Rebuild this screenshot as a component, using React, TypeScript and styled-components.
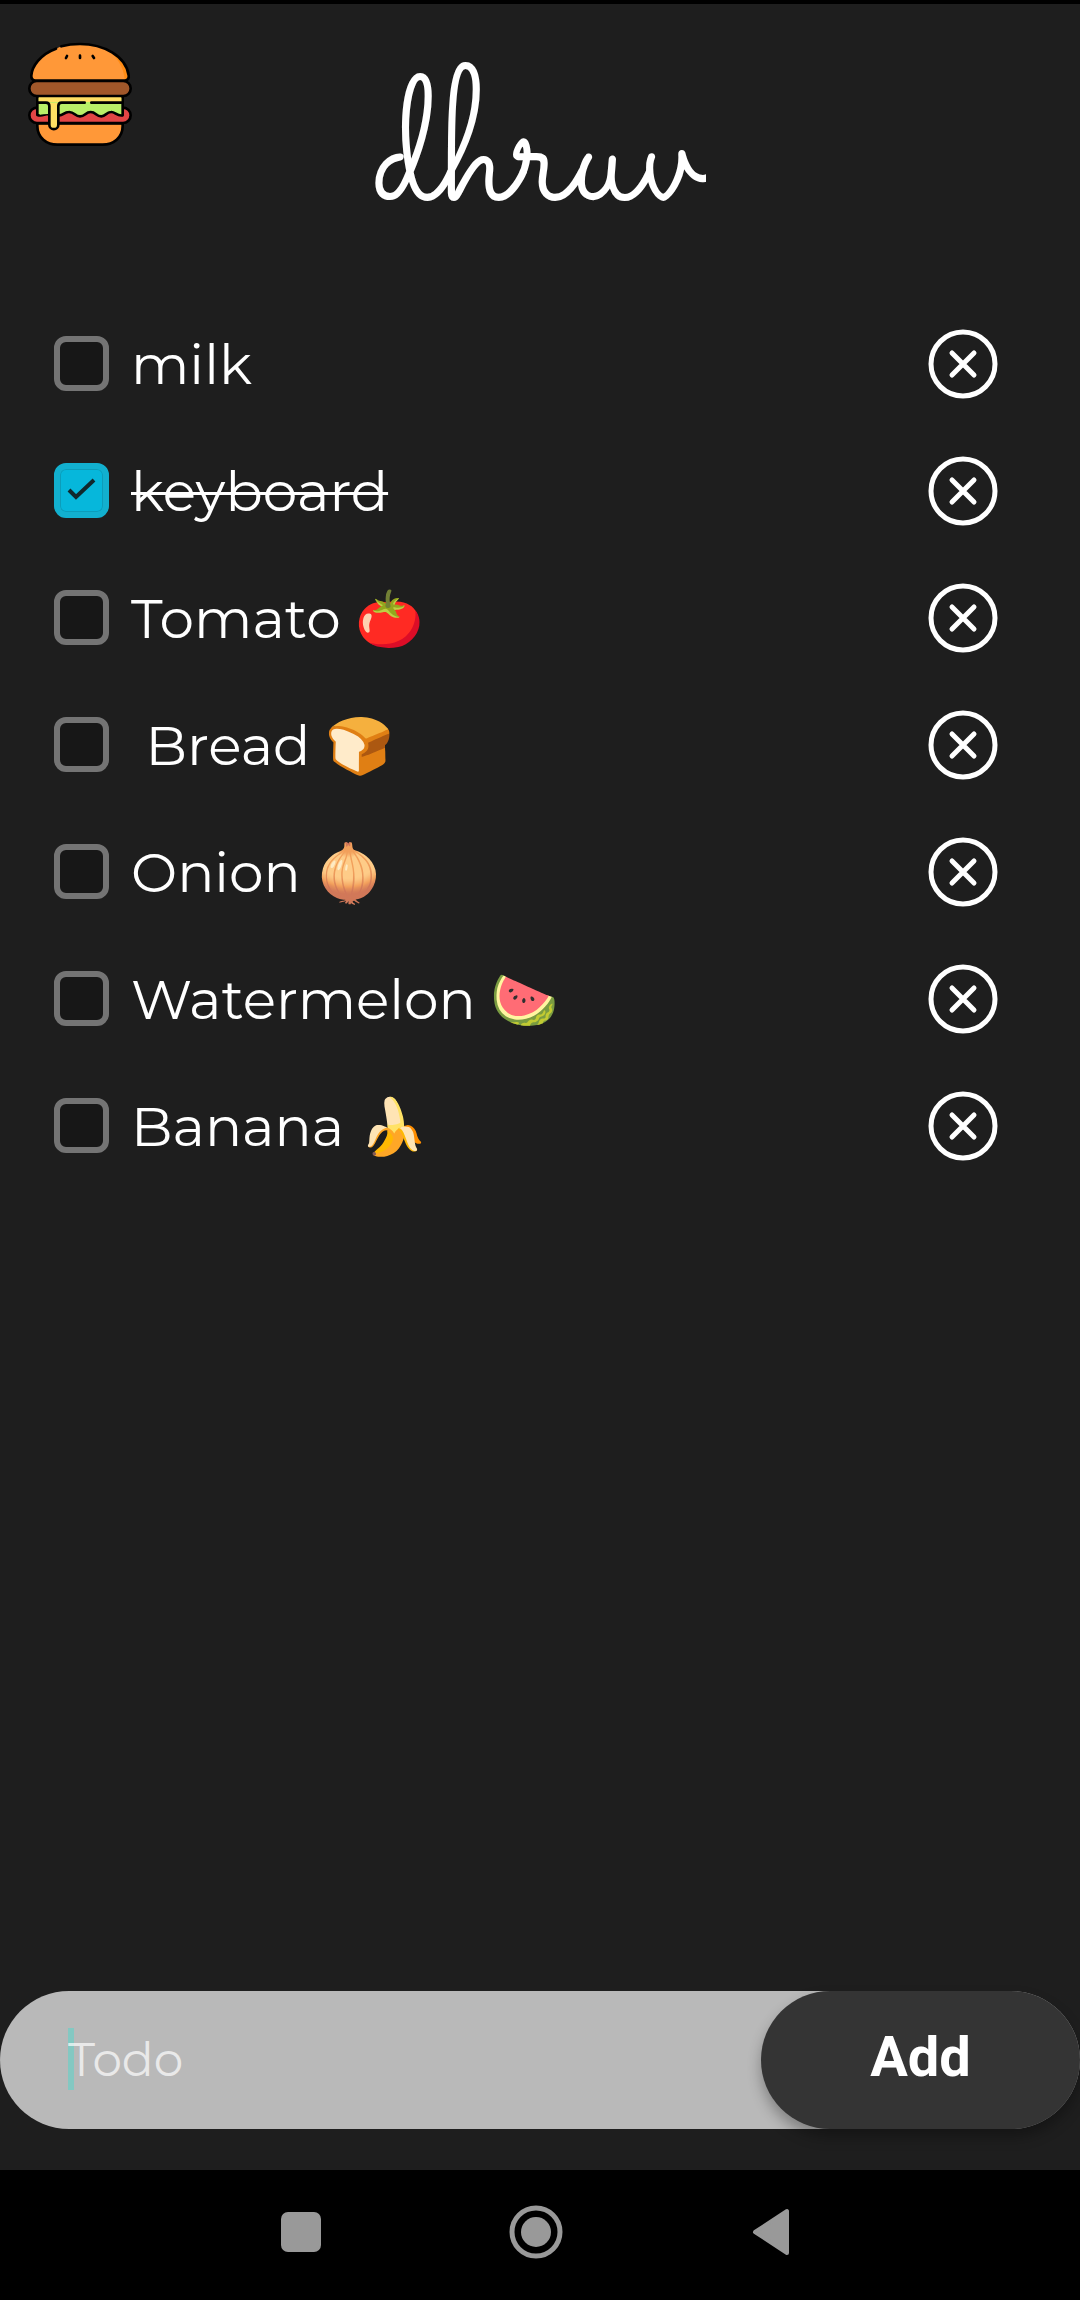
import React, { useState } from 'react';
import styled, { createGlobalStyle } from 'styled-components';

const GlobalStyle = createGlobalStyle`
  *, *::before, *::after { box-sizing: border-box; }
  body {
    margin: 0;
    background: #1e1e1e;
    color: #fff;
    font-family: Montserrat, Inter, "Liberation Sans", sans-serif;
  }
  button { border: 0; padding: 0; background: none; color: inherit; cursor: pointer; }
`;

const Screen = styled.div`
  display: flex;
  flex-direction: column;
  min-height: 100vh;
  border-top: 4px solid #000;
`;

const Header = styled.header`
  display: grid;
  grid-template-columns: 160px 1fr 160px;
  align-items: start;
  padding-bottom: 8px;
`;

const MenuButton = styled.button`
  display: flex;
  justify-self: center;
  margin-top: 38px;
`;

const Title = styled.h1`
  justify-self: center;
  margin: 24px 0 0;
  overflow-x: clip;
  font-family: Sacramento, cursive;
  font-size: 193px;
  font-weight: 400;
  line-height: 264px;
`;

const List = styled.ul`
  flex: 1;
  margin: 0;
  padding: 0 82px 0 54px;
  list-style: none;
`;

const Item = styled.li`
  display: flex;
  align-items: center;
  justify-content: space-between;
  height: 127px;
`;

const ItemLabel = styled.label`
  display: flex;
  align-items: center;
  gap: 22px;
  cursor: pointer;
`;

const TickFrame = styled.span`
  display: grid;
  width: 55px;
  height: 55px;
  & > * { grid-area: 1 / 1; place-self: center; }
`;

const Tick = styled.input`
  appearance: none;
  width: 100%;
  height: 100%;
  margin: 0;
  border: 6px solid #747474;
  border-radius: 12px;
  background: #171717;
  cursor: pointer;
  &:checked {
    border-color: #12b0cf;
    background: #06b7db;
    box-shadow: inset 0 0 0 1px #0c9dba;
  }
`;

const ItemText = styled.span<{ $done: boolean }>`
  padding-top: 3px;
  font-size: 55px;
  line-height: 72px;
  white-space: pre;
  text-decoration: ${(p) => (p.$done ? 'line-through 3px' : 'none')};
`;

const DeleteButton = styled.button`
  display: flex;
`;

const Form = styled.form`
  display: flex;
  margin-bottom: 41px;
  border-radius: 69px;
  background: #b9b9b9;
`;

const Field = styled.label`
  position: relative;
  display: flex;
  flex: 1;
  min-width: 0;
`;

const Caret = styled.span`
  position: absolute;
  left: 68px;
  top: 37px;
  width: 6px;
  height: 62px;
  background: #84c8c2;
`;

const TextInput = styled.input`
  position: relative;
  width: 100%;
  height: 138px;
  padding: 0 68px 2px;
  border: 0;
  outline: 0;
  background: transparent;
  color: #fff;
  font-family: inherit;
  font-size: 47px;
  &::placeholder { color: rgba(255, 255, 255, 0.7); opacity: 1; }
`;

const AddButton = styled.button`
  width: 319px;
  height: 138px;
  && { padding-bottom: 6px; background: #343434; }
  border-radius: 69px;
  font-family: Roboto, sans-serif;
  font-size: 56px;
  font-weight: 700;
  box-shadow: 0 8px 14px rgba(0, 0, 0, 0.3);
`;

const NavBar = styled.nav`
  display: flex;
  justify-content: center;
  height: 130px;
  padding: 0 8px 6px 0;
  background: #000;
`;

const NavButton = styled.button`
  display: flex;
  align-items: center;
  justify-content: center;
  width: 235px;
`;

const Burger = () => (
  <svg width="104" height="104" viewBox="84 128 312 312" fill="none" stroke="#000" strokeWidth="8" strokeLinecap="round" strokeLinejoin="round" aria-hidden="true">
    <path d="M112 372H368V380C368 415 340 436 308 436H172C140 436 112 415 112 380Z" fill="#ff9838" />
    <rect x="88" y="325" width="304" height="46" rx="23" fill="#e24545" />
    <path d="M112 292H368V348C352 352 345 337 333 338C318 338 318 351 304 351C288 351 288 338 272 338C256 338 256 351 240 351C224 351 224 337 206 338C192 338 188 350 176 348L145 344C132 344 127 352 112 347Z" fill="#b9ef68" />
    <path d="M116 290H364V308H116Z" fill="#ffdf63" stroke="none" />
    <path d="M116 310H140Q148 310 148 320V376A13 13 0 0 0 175 376V320Q175 310 184 310Z" fill="#ffdf63" stroke="none" />
    <path d="M119 314H144V344Q130 344 119 346Z" fill="#b9ef68" stroke="none" />
    <path d="M114 310H138Q148 310 148 320V376A13 13 0 0 0 175 376V320Q175 310 185 310H254M274 310H366" />
    <rect x="88" y="245" width="304" height="45" rx="22" fill="#a0572a" />
    <path d="M168 148C120 165 96 202 94 228C93 237 98 244 106 244H374C382 244 388 237 386 228C378 170 310 134 240 134C220 134 202 136 184 141Z" fill="#ff9838" stroke="none" />
    <path d="M310 145C355 163 380 196 385 230Q386 240 374 240C372 205 350 165 310 145Z" fill="#ff8c14" stroke="none" />
    <path d="M168 148C120 165 96 202 94 228C93 237 98 244 106 244H374C382 244 388 237 386 228C378 170 310 134 240 134C220 134 202 136 184 141M201 170L198 176M240 169V176M278 170L282 176" />
  </svg>
);

const Check = () => (
  <svg width="29" height="29" viewBox="0 0 29 29" fill="none" stroke="#10282d" strokeWidth="4" pointerEvents="none" aria-hidden="true">
    <path d="M2 14L9 21L27 4" />
  </svg>
);

const CloseCircle = () => (
  <svg width="70" height="70" viewBox="0 0 70 70" fill="none" stroke="#fff" strokeLinecap="round" aria-hidden="true">
    <circle cx="35" cy="35" r="32" strokeWidth="5" />
    <path d="M24 24L46 46M46 24L24 46" strokeWidth="5" />
  </svg>
);

const initialItems = [
  { text: 'milk', done: false },
  { text: 'keyboard', done: true },
  { text: 'Tomato 🍅', done: false },
  { text: ' Bread 🍞', done: false },
  { text: 'Onion 🧅', done: false },
  { text: 'Watermelon 🍉', done: false },
  { text: 'Banana 🍌', done: false },
];

export default function App() {
  const [items, setItems] = useState(initialItems);
  const [draft, setDraft] = useState('');

  const toggle = (index: number) =>
    setItems(items.map((item, i) => (i === index ? { ...item, done: !item.done } : item)));
  const remove = (index: number) => setItems(items.filter((_, i) => i !== index));
  const add = (event: React.FormEvent) => {
    event.preventDefault();
    if (!draft) return;
    setItems([...items, { text: draft, done: false }]);
    setDraft('');
  };

  return (
    <Screen>
      <GlobalStyle />
      <Header>
        <MenuButton type="button" aria-label="Menu"><Burger /></MenuButton>
        <Title>dhruv</Title>
      </Header>
      <List>
        {items.map((item, i) => (
          <Item key={i}>
            <ItemLabel>
              <TickFrame>
                <Tick type="checkbox" checked={item.done} onChange={() => toggle(i)} />
                {item.done && <Check />}
              </TickFrame>
              <ItemText $done={item.done}>{item.text}</ItemText>
            </ItemLabel>
            <DeleteButton type="button" aria-label="Delete" onClick={() => remove(i)}><CloseCircle /></DeleteButton>
          </Item>
        ))}
      </List>
      <Form onSubmit={add}>
        <Field>
          {!draft && <Caret />}
          <TextInput placeholder="Todo" aria-label="Todo" value={draft} onChange={(e) => setDraft(e.target.value)} />
        </Field>
        <AddButton type="submit">Add</AddButton>
      </Form>
      <NavBar>
        <NavButton type="button" aria-label="Recent apps">
          <svg width="40" height="40" viewBox="0 0 40 40" fill="#999"><rect width="40" height="40" rx="7" /></svg>
        </NavButton>
        <NavButton type="button" aria-label="Home">
          <svg width="54" height="54" viewBox="0 0 54 54" fill="none" stroke="#999" strokeWidth="5">
            <circle cx="27" cy="27" r="24" />
            <circle cx="27" cy="27" r="15" fill="#999" stroke="none" />
          </svg>
        </NavButton>
        <NavButton type="button" aria-label="Back">
          <svg width="38" height="48" viewBox="0 0 38 48" fill="#999" stroke="#999" strokeWidth="4" strokeLinejoin="round">
            <path d="M35 3V45L3 24Z" />
          </svg>
        </NavButton>
      </NavBar>
    </Screen>
  );
}
